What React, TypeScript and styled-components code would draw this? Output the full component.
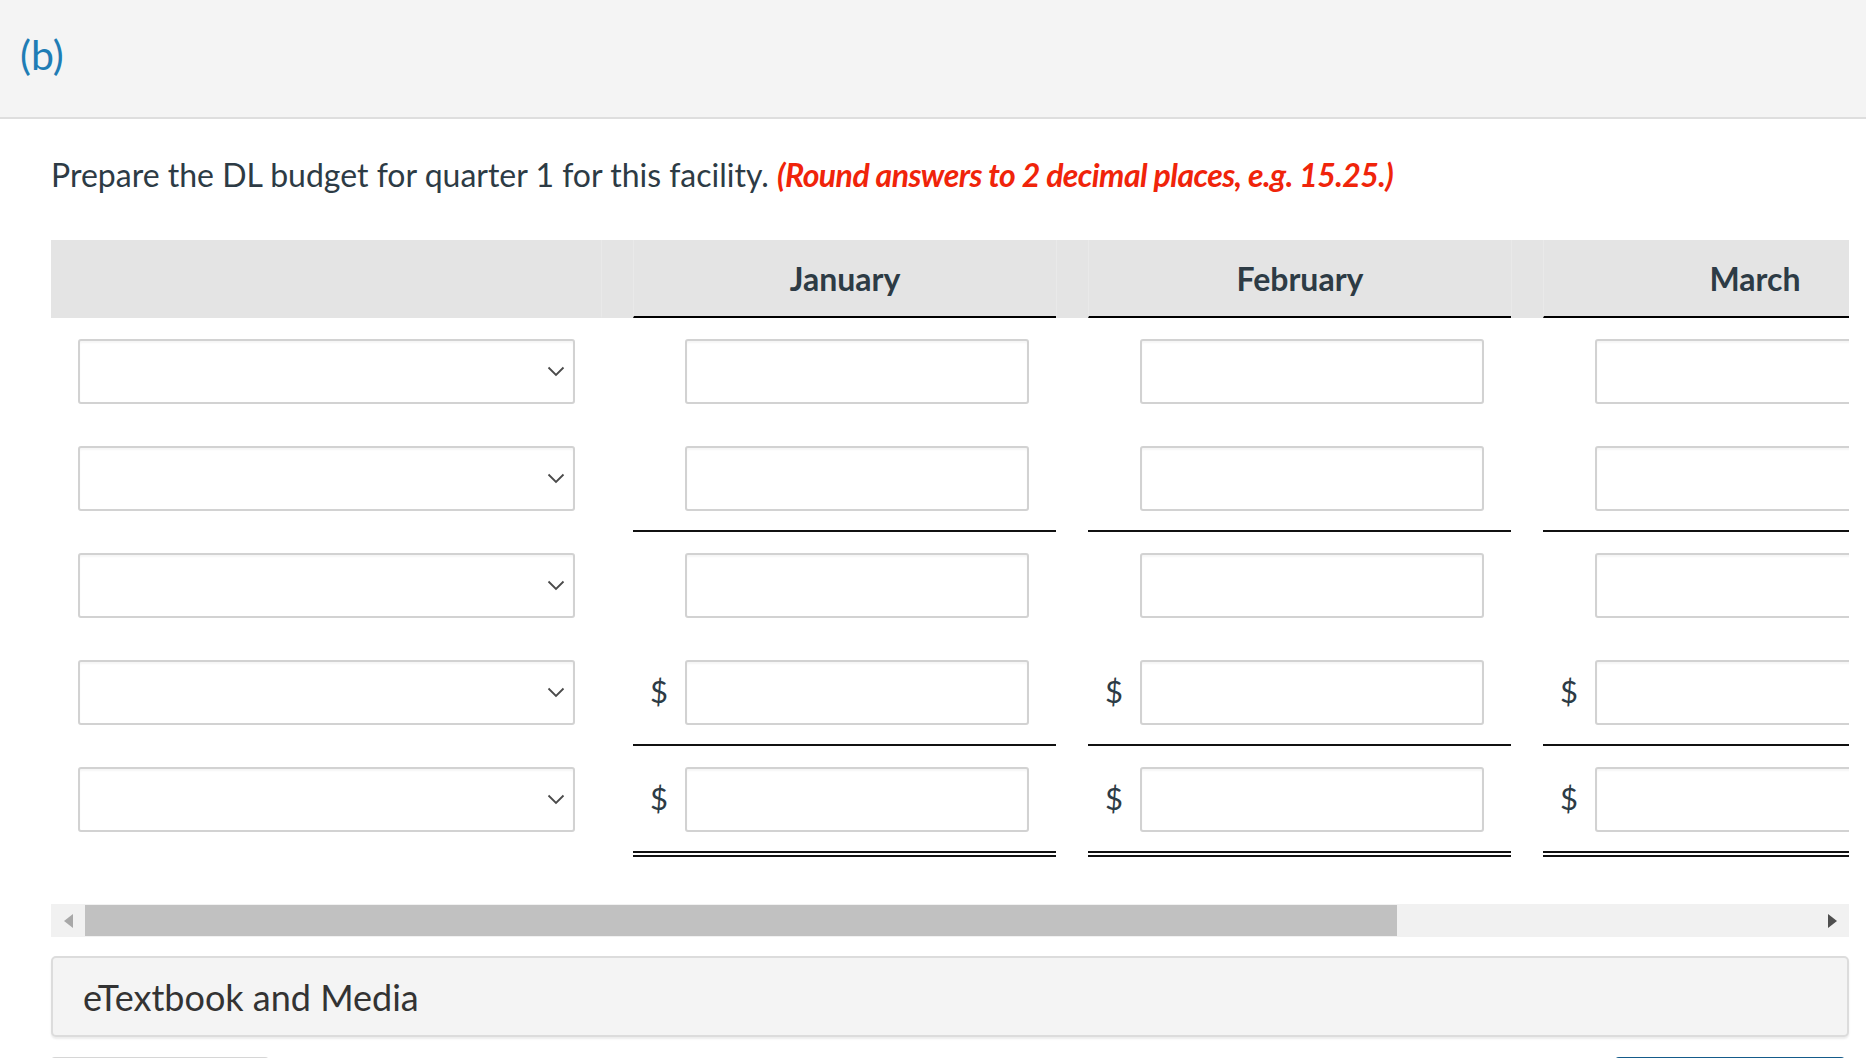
import React from "react";
import styled, { createGlobalStyle } from "styled-components";

const LABEL_W = 550;
const GAP_W = 32;
const COL_W = 423;
const months = ["January", "February", "March", "Quarter"];

type Line = "none" | "single" | "double";

interface IRowSpec {
  dollar: boolean;
  line: Line;
}

const rows: IRowSpec[] = [
  { dollar: false, line: "none" },
  { dollar: false, line: "single" },
  { dollar: false, line: "none" },
  { dollar: true, line: "single" },
  { dollar: true, line: "double" },
];

const TABLE_W = LABEL_W + months.length * (GAP_W + COL_W);
const VISIBLE_W = 1798;

const GlobalStyle = createGlobalStyle`
  html, body {
    margin: 0;
    padding: 0;
    background: #fff;
    font-family: Lato, "Open Sans", "Liberation Sans", sans-serif;
    color: #2d3b45;
  }
  * { box-sizing: border-box; }
`;

const Page = styled.div`
  width: 1866px;
  height: 1058px;
  overflow: hidden;
`;

const PartHeader = styled.div`
  height: 119px;
  background: #f4f4f4;
  border-bottom: 2px solid #dedede;
  padding: 30px 0 0 20px;
  font-size: 41px;
  line-height: 50px;
  color: #1f7db5;
`;

const Content = styled.div`
  padding: 0 17px 0 51px;
`;

const Instruction = styled.p`
  margin: 34px 0 0;
  font-size: 32px;
  line-height: 44px;
  color: #2d3b45;
`;

const Hint = styled.span`
  color: #f0240a;
  font-weight: 700;
  font-style: italic;
  letter-spacing: -0.55px;
`;

const ScrollArea = styled.div`
  margin-top: 43px;
  width: ${VISIBLE_W}px;
  overflow: hidden;
`;

const Table = styled.div`
  width: ${TABLE_W}px;
`;

const Row = styled.div`
  display: grid;
  grid-template-columns: ${LABEL_W}px repeat(${months.length}, ${GAP_W}px ${COL_W}px);
`;

const HeadCell = styled.div<{ $data?: boolean; $spacer?: boolean }>`
  height: 78px;
  background: #e4e4e4;
  border-bottom: 2px solid ${(p) => (p.$data ? "#000" : "transparent")};
  border-left: ${(p) => (p.$spacer || p.$data ? "1px solid #e9e9e9" : "none")};
  display: flex;
  align-items: center;
  justify-content: center;
  font-size: 32px;
  font-weight: 700;
  color: #2d3b45;
`;

const LabelCell = styled.div`
  padding: 21px 26px 19px 27px;
`;

const SelectBox = styled.div`
  height: 65px;
  border: 2px solid #d2d2d2;
  border-radius: 3px;
  background: #fff;
  box-shadow: inset 0 2px 2px rgba(0, 0, 0, 0.04);
  display: flex;
  align-items: center;
  justify-content: flex-end;
  padding-right: 8px;
  color: #444;
`;

const Spacer = styled.div``;

const lineStyle = (line: Line) => {
  if (line === "single") return "2px solid #111";
  if (line === "double") return "6px double #111";
  return "2px solid transparent";
};

const DataCell = styled.div<{ $line: Line }>`
  display: flex;
  align-items: flex-start;
  padding: 21px 27px 19px 0;
  border-bottom: ${(p) => lineStyle(p.$line)};
`;

const Dollar = styled.span`
  width: 52px;
  height: 65px;
  display: flex;
  align-items: center;
  justify-content: center;
  font-size: 31px;
  color: #2d3b45;
  padding-bottom: 4px;
`;

const Field = styled.input`
  width: 344px;
  height: 65px;
  border: 2px solid #d2d2d2;
  border-radius: 3px;
  background: #fff;
  box-shadow: inset 0 2px 2px rgba(0, 0, 0, 0.04);
  font-family: inherit;
  font-size: 24px;
  padding: 0 12px;
  outline: none;
`;

const ScrollBar = styled.div`
  margin-top: 47px;
  width: ${VISIBLE_W}px;
  height: 33px;
  background: #f1f1f1;
  display: flex;
  align-items: stretch;
`;

const ArrowBtn = styled.div<{ $dim?: boolean }>`
  width: 34px;
  display: flex;
  align-items: center;
  justify-content: center;
  color: ${(p) => (p.$dim ? "#a8a8a8" : "#4f4f4f")};
`;

const Track = styled.div`
  flex: 1;
  padding: 1px 0;
  display: flex;
`;

const Thumb = styled.div`
  background: #c1c1c1;
  height: 100%;
`;

const MediaPanel = styled.div`
  margin-top: 19px;
  width: ${VISIBLE_W}px;
  height: 81px;
  background: #f4f4f4;
  border: 2px solid #dcdcdc;
  border-radius: 5px;
  box-shadow: 0 2px 2px rgba(0, 0, 0, 0.08);
  display: flex;
  align-items: center;
  padding-left: 30px;
  font-size: 36px;
  color: #333;
`;

const ButtonRow = styled.div`
  margin-top: 20px;
  width: ${VISIBLE_W}px;
  display: flex;
  justify-content: space-between;
`;

const FooterBtn = styled.div<{ $primary?: boolean }>`
  height: 50px;
  width: ${(p) => (p.$primary ? "230px" : "218px")};
  border: 2px solid ${(p) => (p.$primary ? "#155b8a" : "#d6d6d6")};
  background: ${(p) => (p.$primary ? "#1a6da3" : "#fff")};
  border-radius: 4px;
  margin-right: ${(p) => (p.$primary ? "4px" : "0")};
`;

const Chevron = () => (
  <svg width="18" height="11" viewBox="0 0 18 11" fill="none">
    <polyline points="1.5,1.5 9,9 16.5,1.5" stroke="#4a4a4a" strokeWidth="1.8" />
  </svg>
);

const Triangle = ({ dir }: { dir: "left" | "right" }) => (
  <svg width="9" height="14" viewBox="0 0 9 14">
    {dir === "left" ? <polygon points="9,0 0,7 9,14" fill="currentColor" /> : <polygon points="0,0 9,7 0,14" fill="currentColor" />}
  </svg>
);

function BudgetRow({ spec }: { spec: IRowSpec }) {
  return (
    <Row>
      <LabelCell>
        <SelectBox>
          <Chevron />
        </SelectBox>
      </LabelCell>
      {months.map((m) => (
        <React.Fragment key={m}>
          <Spacer />
          <DataCell $line={spec.line}>
            <Dollar>{spec.dollar ? "$" : ""}</Dollar>
            <Field type="text" />
          </DataCell>
        </React.Fragment>
      ))}
    </Row>
  );
}

export default function App() {
  const thumbPct = (VISIBLE_W / TABLE_W) * 100;
  return (
    <Page>
      <GlobalStyle />
      <PartHeader>(b)</PartHeader>
      <Content>
        <Instruction>
          Prepare the DL budget for quarter 1 for this facility.{" "}
          <Hint>(Round answers to 2 decimal places, e.g. 15.25.)</Hint>
        </Instruction>

        <ScrollArea>
          <Table>
            <Row>
              <HeadCell />
              {months.map((m) => (
                <React.Fragment key={m}>
                  <HeadCell $spacer />
                  <HeadCell $data>{m}</HeadCell>
                </React.Fragment>
              ))}
            </Row>
            {rows.map((r, i) => (
              <BudgetRow key={i} spec={r} />
            ))}
          </Table>
        </ScrollArea>

        <ScrollBar>
          <ArrowBtn $dim>
            <Triangle dir="left" />
          </ArrowBtn>
          <Track>
            <Thumb style={{ width: `${thumbPct}%` }} />
          </Track>
          <ArrowBtn>
            <Triangle dir="right" />
          </ArrowBtn>
        </ScrollBar>

        <MediaPanel>eTextbook and Media</MediaPanel>

        <ButtonRow>
          <FooterBtn />
          <FooterBtn $primary />
        </ButtonRow>
      </Content>
    </Page>
  );
}
